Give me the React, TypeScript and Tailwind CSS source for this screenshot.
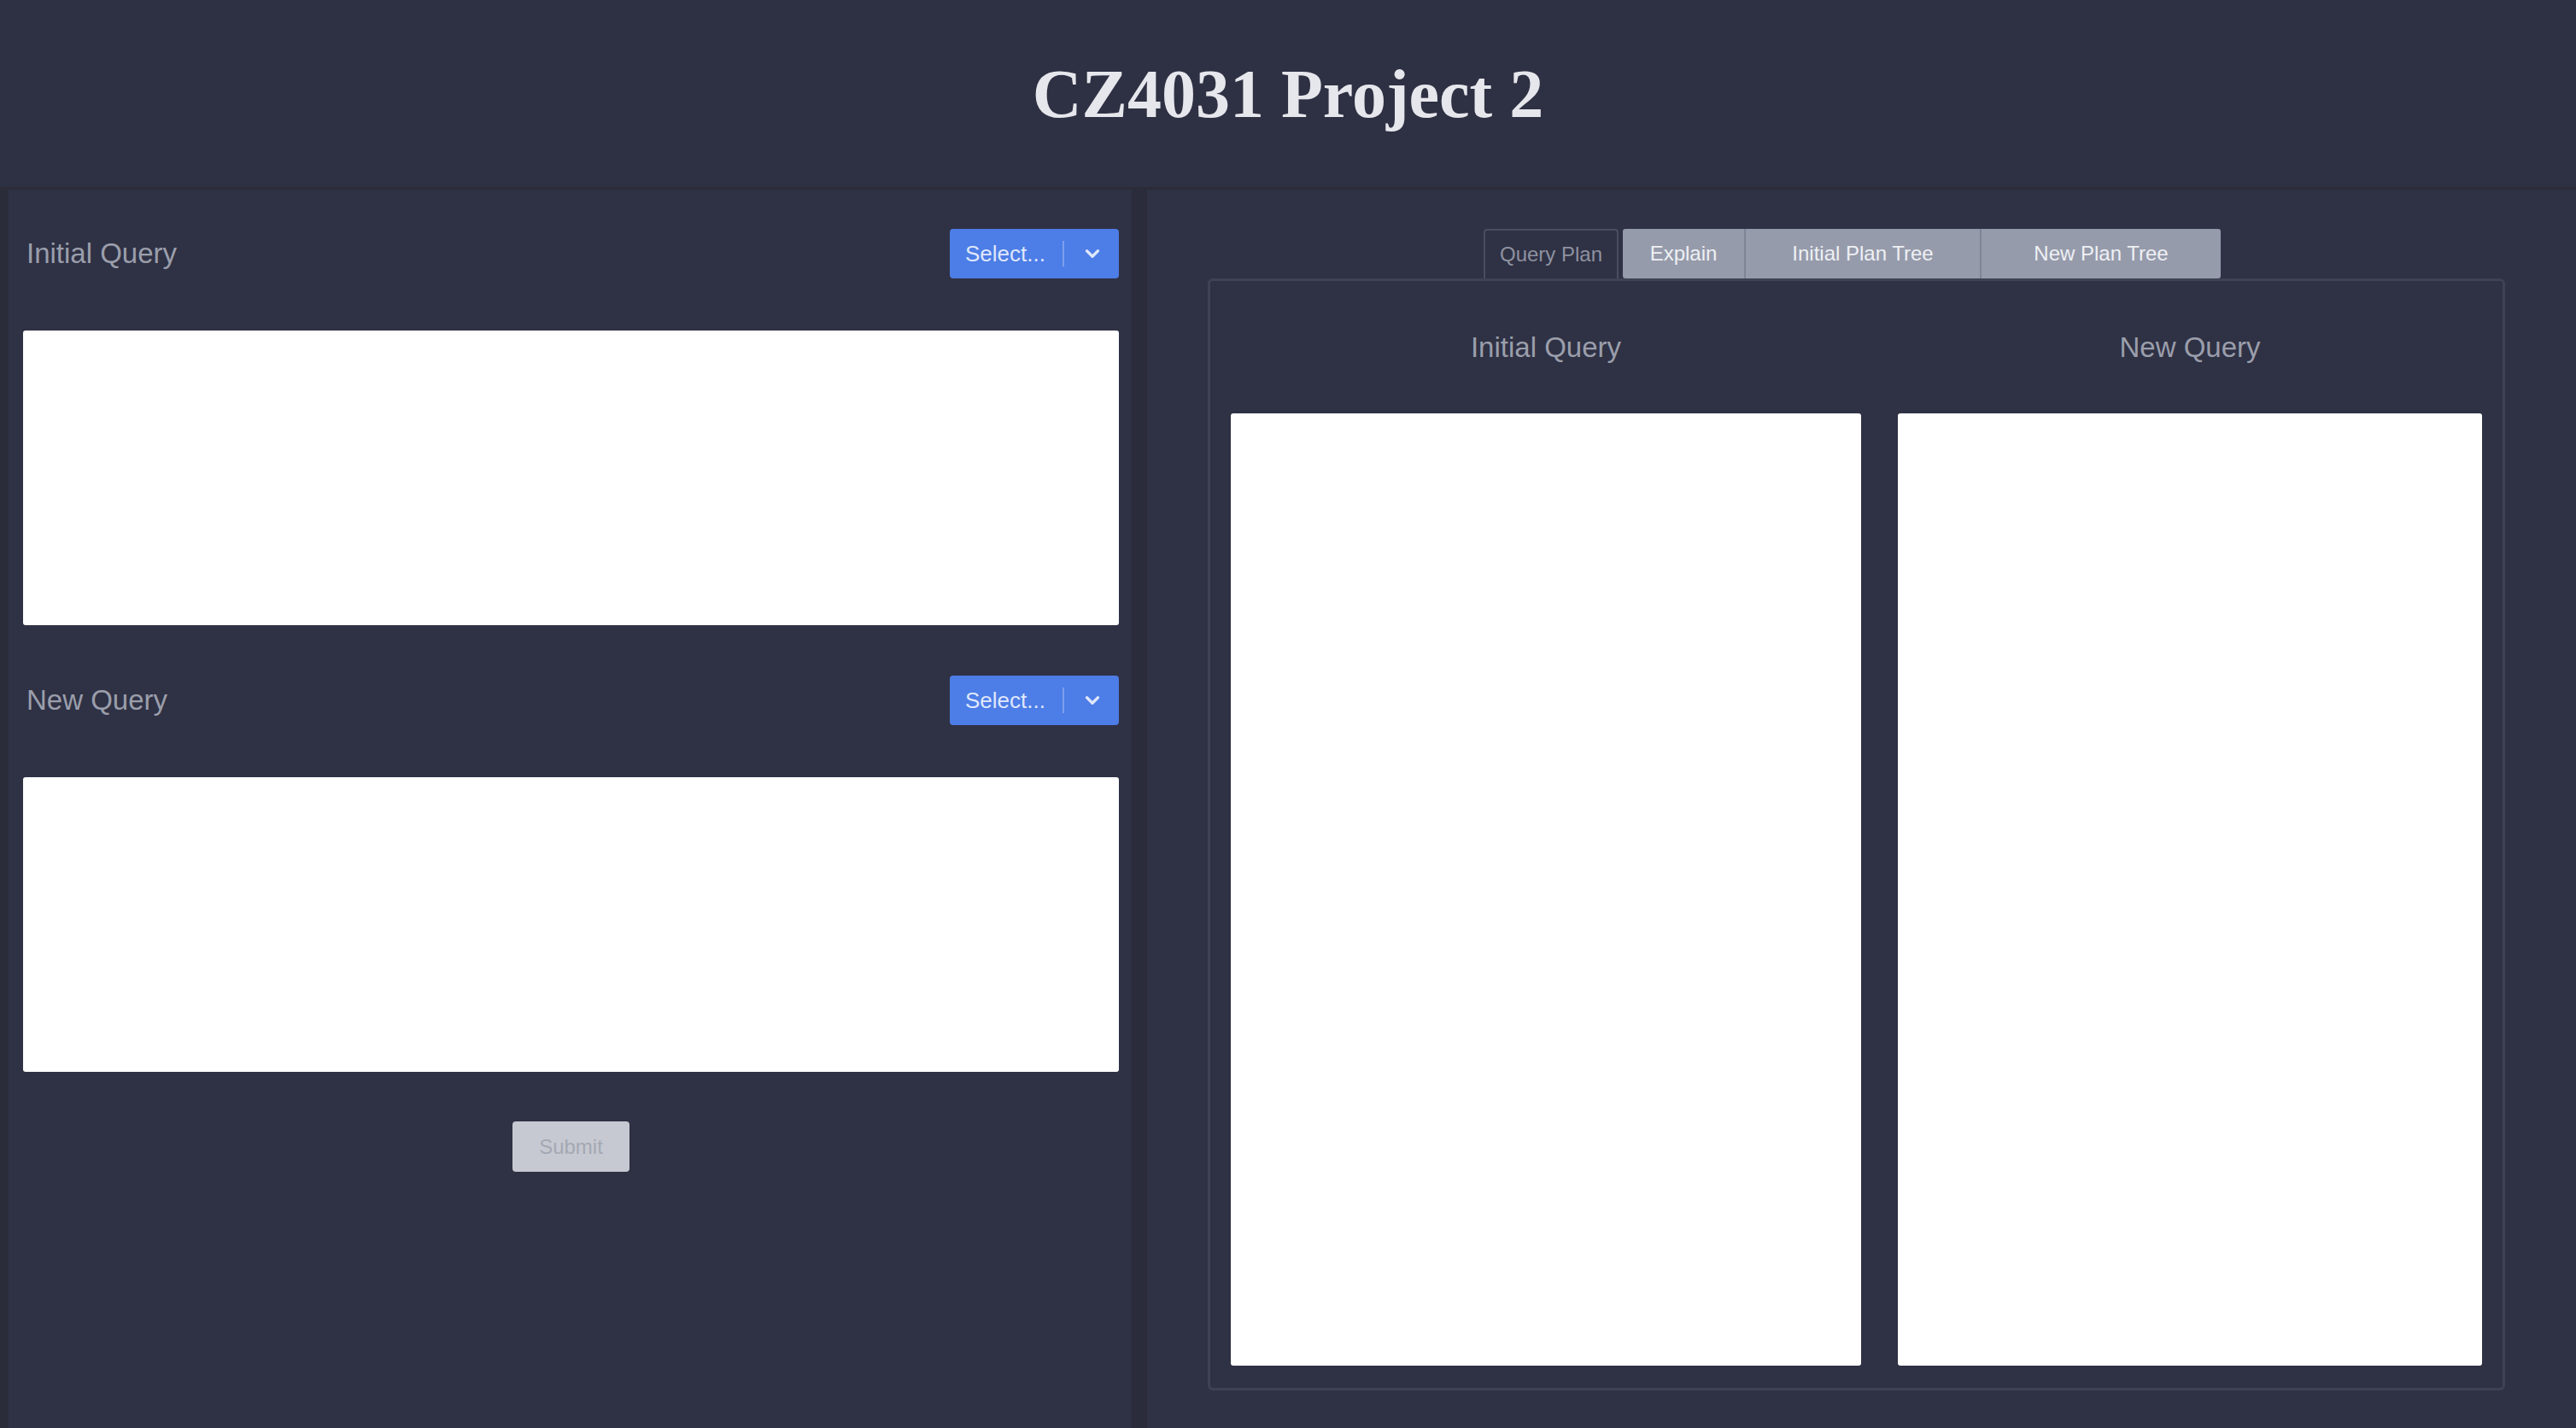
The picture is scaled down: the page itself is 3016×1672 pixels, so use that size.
import { ChevronDown } from "lucide-react";

const sans = { fontFamily: '"Liberation Sans", Arial, sans-serif' };

function QuerySelect() {
  return (
    <div className="flex h-[58px] w-[198px] items-center justify-between rounded-[4px] bg-[#4d7de6] px-[18px] text-[26px] text-[#dfe7fb]">
      <span>Select...</span>
      <span className="h-[30px] w-[2px] bg-[#7da0ee]" />
      <ChevronDown className="h-[26px] w-[26px]" strokeWidth={3} />
    </div>
  );
}

function QueryInput({ label }: { label: string }) {
  return (
    <div className="flex flex-col">
      <div className="flex h-[58px] items-center justify-between">
        <span className="pl-[4px] text-[33px] text-[#9a9eab]">{label}</span>
        <QuerySelect />
      </div>
      <textarea className="mt-[61px] h-[345px] w-full resize-none rounded-[3px] bg-white p-3 text-[24px] text-black outline-none" />
    </div>
  );
}

export default function App() {
  const tabs = [
    { name: "Explain", w: "w-[142px]" },
    { name: "Initial Plan Tree", w: "w-[276px]" },
    { name: "New Plan Tree", w: "w-[282px]" },
  ];

  return (
    <div className="flex h-[1672px] w-full flex-col bg-[#2f3144]" style={sans}>
      <header className="flex h-[222px] items-center justify-center border-b-[3px] border-[#2b2c37] bg-[#2e3043]">
        <h1
          className="text-[80px] font-bold text-[#e6e7ec]"
          style={{ fontFamily: '"Liberation Serif", "Times New Roman", serif' }}
        >
          CZ4031 Project 2
        </h1>
      </header>

      <main className="flex flex-1">
        {/* 왼쪽: 쿼리 입력 */}
        <section className="flex w-[1325px] flex-col border-l-[10px] border-[#2a2c3a] pl-[17px] pr-[15px] pt-[46px]">
          <QueryInput label="Initial Query" />
          <div className="mt-[59px]">
            <QueryInput label="New Query" />
          </div>
          <div className="mt-[58px] flex justify-center">
            <button className="h-[59px] w-[137px] rounded-[4px] bg-[#c6c9d1] text-[24px] text-[#a4a8b4]">
              Submit
            </button>
          </div>
        </section>

        <div className="w-[18px] bg-[#2a2c3b]" />

        {/* 오른쪽: 결과 탭 */}
        <section className="flex flex-1 flex-col items-center pt-[46px]">
          <div className="flex h-[58px] items-stretch pr-[22px]">
            <div className="flex w-[158px] items-center justify-center rounded-t-[4px] border-2 border-b-0 border-[#4a4d5e] bg-[#2f3144] text-[24px] text-[#8e92a0]">
              Query Plan
            </div>
            <div className="ml-[5px] flex rounded-[3px] bg-[#969bab]">
              {tabs.map((t, i) => (
                <div
                  key={t.name}
                  className={`${t.w} flex items-center justify-center text-[24px] text-[#eef0f4] ${
                    i > 0 ? "border-l-2 border-[#7f8496]" : ""
                  }`}
                >
                  {t.name}
                </div>
              ))}
            </div>
          </div>

          <div className="ml-[-12px] flex h-[1302px] w-[1519px] flex-col rounded-[6px] border-[3px] border-[#3f4254] px-[24px] pb-[26px]">
            <div className="grid grid-cols-[738px_684px] gap-x-[43px]">
              <div className="flex h-[155px] items-center justify-center text-[33px] text-[#9a9eab]">
                Initial Query
              </div>
              <div className="flex h-[155px] items-center justify-center text-[33px] text-[#9a9eab]">
                New Query
              </div>
              <div className="h-[1115px] rounded-[3px] bg-white" />
              <div className="h-[1115px] rounded-[3px] bg-white" />
            </div>
          </div>
        </section>
      </main>
    </div>
  );
}
